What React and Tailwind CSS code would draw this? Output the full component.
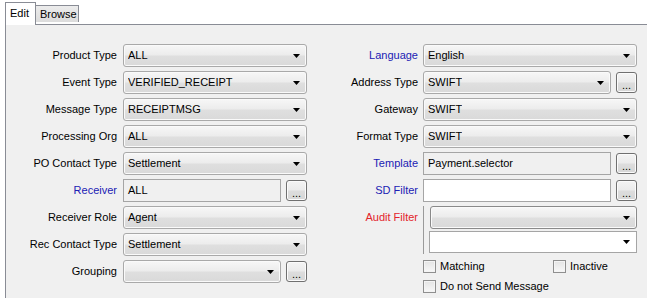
import React from "react";

const Arrow = () => (
  <svg width="7" height="4" viewBox="0 0 7 4" className="shrink-0">
    <path d="M0 0H7L3.5 4Z" fill="#000" />
  </svg>
);

const Combo = ({ value, w }) => (
  <div
    className={`${w} h-[23px] flex items-center justify-between pl-[4px] pr-[6px] border border-[#a9a9a9] rounded-[3px] bg-[linear-gradient(to_bottom,#f7f7f7_0%,#ececec_48%,#dfdfdf_52%,#d9d9d9_100%)] shadow-[inset_0_0_0_1px_#fafafa]`}
  >
    <span className="truncate">{value}</span>
    <Arrow />
  </div>
);

const Dots = () => (
  <div className="w-[21px] h-[21px] ml-[5px] border border-[#707070] rounded-[3px] bg-[linear-gradient(to_bottom,#f4f4f4_0%,#ebebeb_48%,#dddddd_52%,#d6d6d6_100%)] shadow-[inset_0_0_0_1px_#fbfbfb] flex justify-center items-end pb-[1px] leading-[12px] text-[11px]">
    ...
  </div>
);

const Field = ({ value, w, white }) => (
  <div
    className={`${w} h-[23px] flex items-center pl-[4px] border border-[#a5a5a5] ${white ? "bg-white" : "bg-[#f0f0f0]"}`}
  >
    {value}
  </div>
);

const Row = ({ label, color = "text-black", lw = "w-[111px]", gap = "ml-[6px]", children }) => (
  <div className="flex items-center h-[23px]">
    <div className={`${lw} text-right whitespace-nowrap ${color}`}>{label}</div>
    <div className={`${gap} flex items-center`}>{children}</div>
  </div>
);

const Check = ({ label }) => (
  <div className="flex items-center">
    <div className="w-[13px] h-[13px] border border-[#8f8f8f] bg-[linear-gradient(to_bottom,#e4e4e4,#f8f8f8)] shadow-[inset_0_0_0_1px_#f4f4f4]" />
    <span className="ml-[4px]">{label}</span>
  </div>
);

export default function App() {
  return (
    <div className="w-[647px] h-[298px] bg-white overflow-hidden font-['Liberation_Sans',Arial,sans-serif] text-[11px] leading-[13px] text-black">
      <div className="flex items-end h-[24px] pl-[5px]">
        <div className="relative z-10 w-[31px] h-[23px] -mb-px border-l border-t border-r border-[#898c95] bg-white pl-[4px] pt-[4px]">
          Edit
        </div>
        <div className="w-[43px] h-[17px] mb-[2px] border-t border-r border-[#898c95] bg-[linear-gradient(to_bottom,#ececec,#dcdcdc)] pl-[4px] pt-[2px]">
          Browse
        </div>
      </div>
      <div className="ml-[5px] h-[274px] border-l border-t border-[#898c95] bg-[#f0f0f0] pt-[19px] flex">
        <div className="w-[301px] flex flex-col gap-[4px]">
          <Row label="Product Type"><Combo value="ALL" w="w-[184px]" /></Row>
          <Row label="Event Type"><Combo value="VERIFIED_RECEIPT" w="w-[184px]" /></Row>
          <Row label="Message Type"><Combo value="RECEIPTMSG" w="w-[184px]" /></Row>
          <Row label="Processing Org"><Combo value="ALL" w="w-[184px]" /></Row>
          <Row label="PO Contact Type"><Combo value="Settlement" w="w-[184px]" /></Row>
          <Row label="Receiver" color="text-[#2020b4]">
            <Field value="ALL" w="w-[158px]" />
            <Dots />
          </Row>
          <Row label="Receiver Role"><Combo value="Agent" w="w-[184px]" /></Row>
          <Row label="Rec Contact Type"><Combo value="Settlement" w="w-[184px]" /></Row>
          <Row label="Grouping">
            <Combo value="" w="w-[158px]" />
            <Dots />
          </Row>
        </div>
        <div className="w-[330px] flex flex-col gap-[4px]">
          <Row label="Language" color="text-[#2020b4]" gap="ml-[5px]"><Combo value="English" w="w-[214px]" /></Row>
          <Row label="Address Type" gap="ml-[5px]">
            <Combo value="SWIFT" w="w-[188px]" />
            <Dots />
          </Row>
          <Row label="Gateway" gap="ml-[5px]"><Combo value="SWIFT" w="w-[214px]" /></Row>
          <Row label="Format Type" gap="ml-[5px]"><Combo value="SWIFT" w="w-[214px]" /></Row>
          <Row label="Template" color="text-[#2020b4]" gap="ml-[5px]">
            <Field value="Payment.selector" w="w-[188px]" />
            <Dots />
          </Row>
          <Row label="SD Filter" color="text-[#2020b4]" gap="ml-[5px]">
            <Field value="" w="w-[188px]" white />
            <Dots />
          </Row>
          <div className="flex items-start">
            <div className="w-[111px] h-[23px] flex items-center justify-end text-[#e3232b]">Audit Filter</div>
            <div className="ml-[5px] h-[48px] border-l border-[#9a9a9a] pl-[5px] flex flex-col gap-[2px]">
              <div className="ml-[1px]">
                <div className="w-[207px] h-[23px] flex items-center justify-end pr-[6px] border border-[#8a8a8a] rounded-[3px] bg-[linear-gradient(to_bottom,#f7f7f7_0%,#ececec_48%,#dfdfdf_52%,#d9d9d9_100%)] shadow-[inset_0_0_0_1px_#fafafa]">
                  <Arrow />
                </div>
              </div>
              <div className="w-[208px] h-[22px] flex items-center justify-end pr-[6px] border border-[#a5a5a5] bg-white">
                <Arrow />
              </div>
            </div>
          </div>
          <div className="flex flex-col gap-[7px] pl-[116px] pt-[2px]">
            <div className="flex items-center">
              <div className="w-[130px]"><Check label="Matching" /></div>
              <Check label="Inactive" />
            </div>
            <Check label="Do not Send Message" />
          </div>
        </div>
      </div>
    </div>
  );
}
